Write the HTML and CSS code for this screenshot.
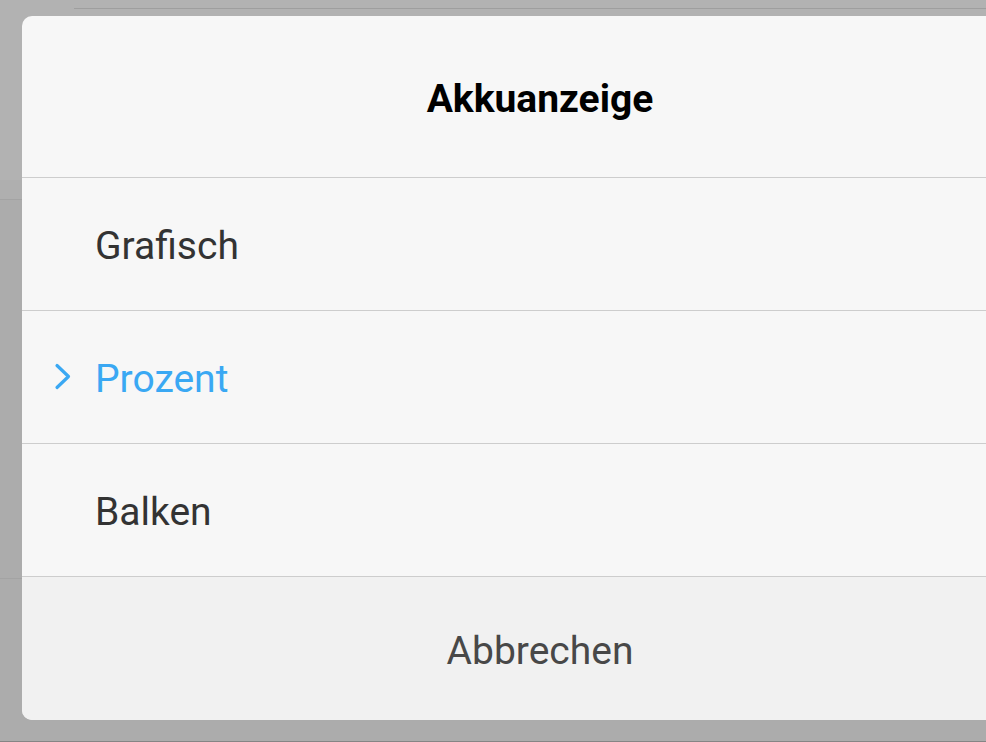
FILE: index.html
```html
<!DOCTYPE html>
<html lang="de">
  <head>
    <meta charset="UTF-8" />
    <meta name="viewport" content="width=device-width, initial-scale=1.0" />
    <title>Akkuanzeige</title>
    <link rel="stylesheet" href="styles.css">
  </head>
  <body>
    <div class="page">
      <div class="page-top"></div>
      <div class="page-band"></div>
      <div class="page-rest"></div>
      <div class="page-bottom"></div>
    </div>

    <div class="dialog">
      <h2 class="dialog-title">Akkuanzeige</h2>
      <div class="option">Grafisch</div>
      <div class="option selected">
        <svg class="chevron" width="20" height="30" viewBox="0 0 20 30">
          <path d="M4 4.5 L15.5 15.5 L4 26.5" fill="none" stroke="currentColor" stroke-width="3.2" stroke-linecap="round" stroke-linejoin="round" />
        </svg>
        Prozent
      </div>
      <div class="option">Balken</div>
      <div class="cancel">Abbrechen</div>
    </div>
  </body>
</html>
```

FILE: styles.css
```css
body {
  margin: 0;
  height: 742px;
  overflow: hidden;
  background-color: #acacac;
  font-family: Roboto, "Liberation Sans", sans-serif;
}
.page {
  display: flex;
  flex-direction: column;
  height: 742px;
}
.page-top {
  height: 180px;
  background-color: #b2b2b2;
  border-top: 8px solid #b2b2b2;
  box-sizing: border-box;
  background-image: linear-gradient(#9e9e9e, #9e9e9e);
  background-size: calc(100% - 74px) 1px;
  background-position: 74px 0;
  background-repeat: no-repeat;
}
.page-band {
  height: 19px;
  background-color: #afafaf;
  border-bottom: 1px solid #a3a3a3;
}
.page-rest {
  height: 378px;
  border-bottom: 1px solid #a3a3a3;
}
.page-bottom {
  flex: 1;
  border-bottom: 1px solid #858585;
}
.dialog {
  position: absolute;
  top: 16px;
  left: 22px;
  width: 1036px;
  height: 704px;
  background-color: #f7f7f7;
  border-radius: 10px;
  overflow: hidden;
  display: flex;
  flex-direction: column;
}
.dialog-title {
  margin: 0;
  height: 162px;
  flex: none;
  display: flex;
  align-items: center;
  justify-content: center;
  padding-top: 4px;
  box-sizing: border-box;
  font-size: 39px;
  font-weight: bold;
  color: #000;
  border-bottom: 1px solid #cdcdcd;
}
.option {
  height: 133px;
  flex: none;
  display: flex;
  align-items: center;
  padding-left: 73px;
  padding-top: 4px;
  box-sizing: border-box;
  font-size: 39px;
  color: #333333;
  border-bottom: 1px solid #cdcdcd;
  position: relative;
}
.option.selected {
  color: #3aa8f3;
}
.chevron {
  position: absolute;
  left: 31px;
  top: 50px;
}
.cancel {
  flex: 1;
  display: flex;
  align-items: center;
  justify-content: center;
  padding-top: 4px;
  background-color: #f1f1f1;
  font-size: 39px;
  color: #484848;
}
```
